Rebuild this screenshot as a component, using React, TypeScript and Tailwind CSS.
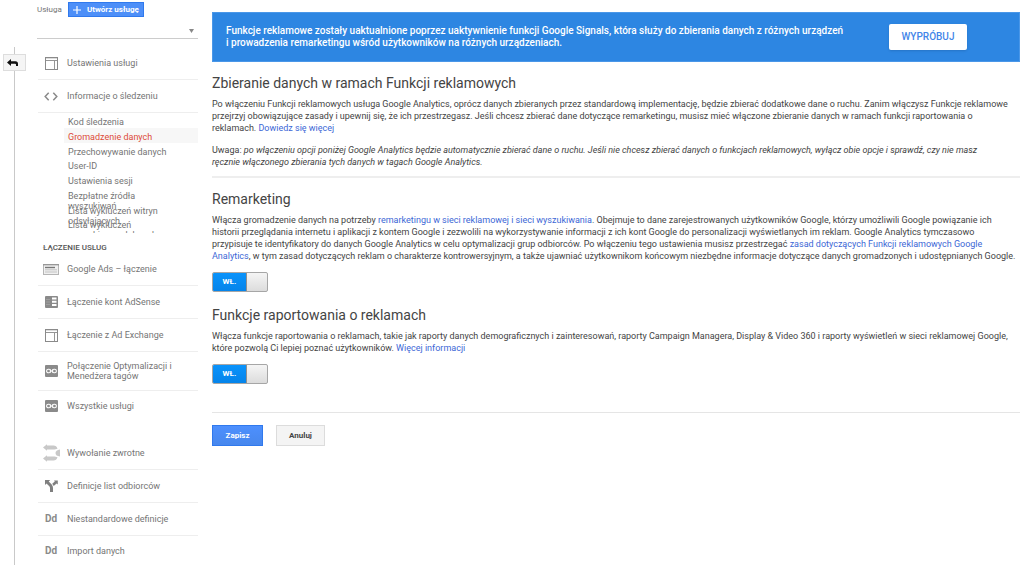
import { useState } from "react";
import type { ReactNode } from "react";

const trackingLinks = [
  "Kod śledzenia",
  "Gromadzenie danych",
  "Przechowywanie danych",
  "User-ID",
  "Ustawienia sesji",
  "Bezpłatne źródła wyszukiwań",
  "Lista wykluczeń witryn odsyłających",
  "Lista wykluczeń wyszukiwanych haseł",
];

function LayoutIcon() {
  return (
    <svg width="13" height="13" viewBox="0 0 13 13" fill="none" stroke="#8a8a8a">
      <rect x="0.5" y="0.5" width="12" height="12" />
      <path d="M1 3.5H12M9.5 4V12" strokeWidth="0.9" />
      <path d="M0 0.5H13" strokeWidth="1.6" />
    </svg>
  );
}

function CodeIcon() {
  return (
    <svg width="14" height="9" viewBox="0 0 14 9" fill="none" stroke="#8a8a8a" strokeWidth="1.5">
      <path d="M4.7 0.8L1.2 4.5L4.7 8.2M9.3 0.8L12.8 4.5L9.3 8.2" />
    </svg>
  );
}

function AdsIcon() {
  return (
    <svg width="16" height="11" viewBox="0 0 16 11">
      <rect x="0.5" y="0.5" width="15" height="10" fill="#f0f0f0" stroke="#b5b5b5" />
      <path d="M0 0.8H16" stroke="#8a8a8a" />
      <path d="M2 3.5H12" stroke="#777" strokeWidth="1.4" />
      <path d="M2 5.8H14M2 8H14" stroke="#c2c2c2" />
    </svg>
  );
}

function AdSenseIcon() {
  return (
    <svg width="13" height="12" viewBox="0 0 13 12">
      <rect width="13" height="12" rx="1" fill="#8a8a8a" />
      <path d="M1 3.5H5M1 6H5M1 8.5H5" stroke="#a8a8a8" strokeWidth="0.7" />
      <path d="M7 2.5H11.5M7 5.7H11.5M7 9H11.5" stroke="#fff" strokeWidth="1.9" />
    </svg>
  );
}

function LinkIcon() {
  return (
    <svg width="13" height="12" viewBox="0 0 13 12" fill="none">
      <rect width="13" height="12" rx="1" fill="#8a8a8a" />
      <rect x="1.6" y="4.2" width="4.2" height="3.6" rx="1.8" stroke="#fff" strokeWidth="1.1" />
      <rect x="7.2" y="4.2" width="4.2" height="3.6" rx="1.8" stroke="#fff" strokeWidth="1.1" />
      <path d="M4.5 6H8.5" stroke="#fff" strokeWidth="0.9" />
    </svg>
  );
}

function PostbackIcon() {
  return (
    <svg className="-my-1 ml-px" width="17" height="18" viewBox="0 0 17 18" fill="#c8c8c8">
      <path d="M0 3.5L4 0.3V1.5H10.5Q13.5 1.5 14.5 4.8L11.5 5.4H4V6.8Z" />
      <path d="M0 14.5L4 11.2V12.6H11.5L14.5 13.2Q13.5 16.5 10.5 16.5H4V17.7Z" />
      <path d="M17 5.5V12.5Q12.5 12 12.5 9Q12.5 6 17 5.5Z" />
    </svg>
  );
}

function AudienceIcon() {
  return (
    <svg width="13" height="12" viewBox="0 0 13 12" fill="#7f7f7f">
      <path d="M0 0H5.2L3.7 1.5L6.5 4.3Q8 5.8 8 8V12H5V8Q5 7 4.3 6.2L1.5 3.5L0 5Z" />
      <path d="M7.2 3.8L9.8 1.6L9 0.5H12.8V4.5L11.6 3.4L8.7 5.9Z" />
    </svg>
  );
}

function DdIcon() {
  return <span className="text-[10px] leading-3 font-bold text-[#8a8a8a]">Dd</span>;
}

function NavItem({ icon, last, children }: { icon: ReactNode; last?: boolean; children: ReactNode }) {
  return (
    <a
      href="#"
      className={`ml-px flex shrink-0 items-center text-[9px] leading-[10px] text-[#757575] ${
        last ? "min-h-[30px]" : "min-h-[33px] border-b border-[#eeeeee] py-[9px]"
      }`}
    >
      <span className="flex w-[29px] shrink-0 justify-center pr-[3px]">{icon}</span>
      <span className="max-w-[120px]">{children}</span>
    </a>
  );
}

function Toggle({ label }: { label: string }) {
  const [on, setOn] = useState(true);
  return (
    <button
      type="button"
      role="switch"
      aria-checked={on}
      aria-label={label}
      onClick={() => setOn(!on)}
      className="flex h-5 w-14 overflow-hidden rounded-xs border border-[#a6a6a6] bg-gradient-to-b from-[#f5f5f5] to-[#dcdcdc]"
    >
      <span
        className={`flex h-full w-[33px] items-center justify-center text-[8px] font-bold text-white ${
          on ? "bg-gradient-to-b from-[#0a93fb] to-[#0584ea]" : "order-2 bg-[#9a9a9a]"
        }`}
      >
        {on ? "WŁ." : "WYŁ."}
      </span>
      <span className={`h-full w-px bg-[#8f8f8f] ${on ? "" : "order-1"}`} />
    </button>
  );
}

function InlineLink({ children }: { children: ReactNode }) {
  return (
    <a href="#" className="text-[#3c67d6]">
      {children}
    </a>
  );
}

export default function App() {
  return (
    <div className="flex min-h-screen bg-white font-[Roboto,sans-serif] text-[#444444]">
      {/* Rail with the collapse button */}
      <div className="flex w-[29px] shrink-0 flex-col items-center pt-[47px]">
        <div className="h-[7px] w-px bg-[#c9c9c9]" />
        <button
          type="button"
          aria-label="Zwiń kolumnę"
          className="flex h-[17px] w-[23px] items-center justify-center border border-[#dddddd] bg-[#f5f5f5]"
        >
          <svg className="mr-1" width="11" height="8" viewBox="0 0 11 8" fill="#111">
            <path d="M0 3.5L4 0V2.3H8.5Q11 2.3 11 4.8V7H9V5.6Q9 4.7 8 4.7H4V7Z" />
          </svg>
        </button>
        <div className="w-px flex-1 bg-[#c9c9c9]" />
      </div>

      {/* Property column */}
      <nav className="ml-2 flex w-[161px] shrink-0 flex-col">
        <div className="flex items-start pt-[2px]">
          <label htmlFor="property" className="w-[31px] text-[8px] leading-[15px] text-[#757575]">
            Usługa
          </label>
          <button
            type="button"
            className="flex h-[15px] w-[76px] items-center border border-[#3079ed] bg-[#4d8ff8] pl-1 text-[8px] font-bold text-white"
          >
            <svg className="mr-[6px]" width="8" height="8" viewBox="0 0 8 8" stroke="#fff" strokeWidth="1.2">
              <path d="M4 0V8M0 4H8" />
            </svg>
            Utwórz usługę
          </button>
        </div>
        <div className="relative mb-[8px] h-[22px] shrink-0 border-b border-[#cccccc]">
          <select id="property" className="h-full w-full appearance-none bg-transparent text-[9px]" />
          <svg className="pointer-events-none absolute right-1 bottom-[5px]" width="5" height="4" viewBox="0 0 5 4">
            <path d="M0 0H5L2.5 4Z" fill="#888" />
          </svg>
        </div>

        <NavItem icon={<LayoutIcon />}>Ustawienia usługi</NavItem>
        <NavItem icon={<CodeIcon />}>Informacje o śledzeniu</NavItem>

        <div className="h-[120px] shrink-0 overflow-hidden pl-[27px]">
          <ul className="grid h-[118px] grid-rows-8">
            {trackingLinks.map((link) => (
              <li
                key={link}
                className={`min-h-0 pt-1 pl-1 text-[9px] leading-[10px] ${
                  link === "Gromadzenie danych" ? "bg-[#f7f7f7] text-[#dd4b39]" : "text-[#757575]"
                }`}
              >
                <a href="#" className="block max-w-[100px]">
                  {link}
                </a>
              </li>
            ))}
          </ul>
        </div>

        <h2 className="pt-[10px] pl-[6px] text-[8px] leading-[10px] font-medium text-[#555555]">ŁĄCZENIE USŁUG</h2>
        <NavItem icon={<AdsIcon />}>Google Ads – łączenie</NavItem>
        <NavItem icon={<AdSenseIcon />}>Łączenie kont AdSense</NavItem>
        <NavItem icon={<LayoutIcon />}>Łączenie z Ad Exchange</NavItem>
        <NavItem icon={<LinkIcon />}>Połączenie Optymalizacji i Menedżera tagów</NavItem>
        <NavItem icon={<LinkIcon />} last>
          Wszystkie usługi
        </NavItem>

        <div className="mt-4">
          <NavItem icon={<PostbackIcon />}>Wywołanie zwrotne</NavItem>
          <NavItem icon={<AudienceIcon />}>Definicje list odbiorców</NavItem>
          <NavItem icon={<DdIcon />}>Niestandardowe definicje</NavItem>
          <NavItem icon={<DdIcon />} last>
            Import danych
          </NavItem>
        </div>
      </nav>

      {/* Settings */}
      <main className="ml-[14px] min-w-0 flex-1 pt-3 pr-1 text-[9px] leading-3">
        <div className="flex h-[50px] items-center border border-[#4a97e8] bg-[#2d86e2] pr-[52px] pl-[13px]">
          <p className="flex-1 text-[10px] leading-3 font-medium text-white">
            Funkcje reklamowe zostały uaktualnione poprzez uaktywnienie funkcji Google Signals, która służy do zbierania danych z różnych urządzeń
            <br />i prowadzenia remarketingu wśród użytkowników na różnych urządzeniach.
          </p>
          <button
            type="button"
            className="h-[26px] w-[78px] rounded-xs bg-white text-[10px] font-medium text-[#4285e8] shadow"
          >
            WYPRÓBUJ
          </button>
        </div>

        <section className="border-b-2 border-[#eeeeee] pb-2">
          <h1 className="pt-3 pb-[6px] text-[14px] leading-[18px]">Zbieranie danych w ramach Funkcji reklamowych</h1>
          <p>
            Po włączeniu Funkcji reklamowych usługa Google Analytics, oprócz danych zbieranych przez standardową
            implementację, będzie zbierać dodatkowe dane o ruchu. Zanim włączysz Funkcje reklamowe
            <br />
            przejrzyj obowiązujące zasady i upewnij się, że ich przestrzegasz. Jeśli chcesz zbierać dane dotyczące
            remarketingu, musisz mieć włączone zbieranie danych w ramach funkcji raportowania o
            <br />
            reklamach. <InlineLink>Dowiedz się więcej</InlineLink>
          </p>
          <p className="mt-[10px]">
            Uwaga:{" "}
            <em>
              po włączeniu opcji poniżej Google Analytics będzie automatycznie zbierać dane o ruchu. Jeśli nie chcesz
              zbierać danych o funkcjach reklamowych, wyłącz obie opcje i sprawdź, czy nie masz
              <br />
              ręcznie włączonego zbierania tych danych w tagach Google Analytics.
            </em>
          </p>
        </section>

        <section>
          <h2 className="pt-3 pb-[6px] text-[14px] leading-[18px]">Remarketing</h2>
          <p className="mb-[10px]">
            Włącza gromadzenie danych na potrzeby{" "}
            <InlineLink>remarketingu w sieci reklamowej i sieci wyszukiwania</InlineLink>. Obejmuje to dane
            zarejestrowanych użytkowników Google, którzy umożliwili Google powiązanie ich
            <br />
            historii przeglądania internetu i aplikacji z kontem Google i zezwolili na wykorzystywanie informacji z ich
            kont Google do personalizacji wyświetlanych im reklam. Google Analytics tymczasowo
            <br />
            przypisuje te identyfikatory do danych Google Analytics w celu optymalizacji grup odbiorców. Po włączeniu
            tego ustawienia musisz przestrzegać{" "}
            <InlineLink>
              zasad dotyczących Funkcji reklamowych Google
              <br />
              Analytics
            </InlineLink>
            , w tym zasad dotyczących reklam o charakterze kontrowersyjnym, a także ujawniać użytkownikom końcowym
            niezbędne informacje dotyczące danych gromadzonych i udostępnianych Google.
          </p>
          <Toggle label="Remarketing" />
        </section>

        <section className="border-b border-[#e5e5e5] pb-7">
          <h2 className="pt-[14px] pb-[6px] text-[14px] leading-[18px]">Funkcje raportowania o reklamach</h2>
          <p className="mb-[10px]">
            Włącza funkcje raportowania o reklamach, takie jak raporty danych demograficznych i zainteresowań, raporty
            Campaign Managera, Display &amp; Video 360 i raporty wyświetleń w sieci reklamowej Google,
            <br />
            które pozwolą Ci lepiej poznać użytkowników. <InlineLink>Więcej informacji</InlineLink>
          </p>
          <Toggle label="Funkcje raportowania o reklamach" />
        </section>

        <div className="mt-3 flex gap-[13px]">
          <button
            type="button"
            className="h-[21px] w-[51px] border border-[#3079ed] bg-gradient-to-b from-[#4d90fe] to-[#4787ed] text-[8px] font-bold text-white"
          >
            Zapisz
          </button>
          <button
            type="button"
            className="h-[21px] w-[49px] border border-[#dcdcdc] bg-[#f4f4f4] text-[8px] font-bold text-[#444444]"
          >
            Anuluj
          </button>
        </div>
      </main>
    </div>
  );
}
